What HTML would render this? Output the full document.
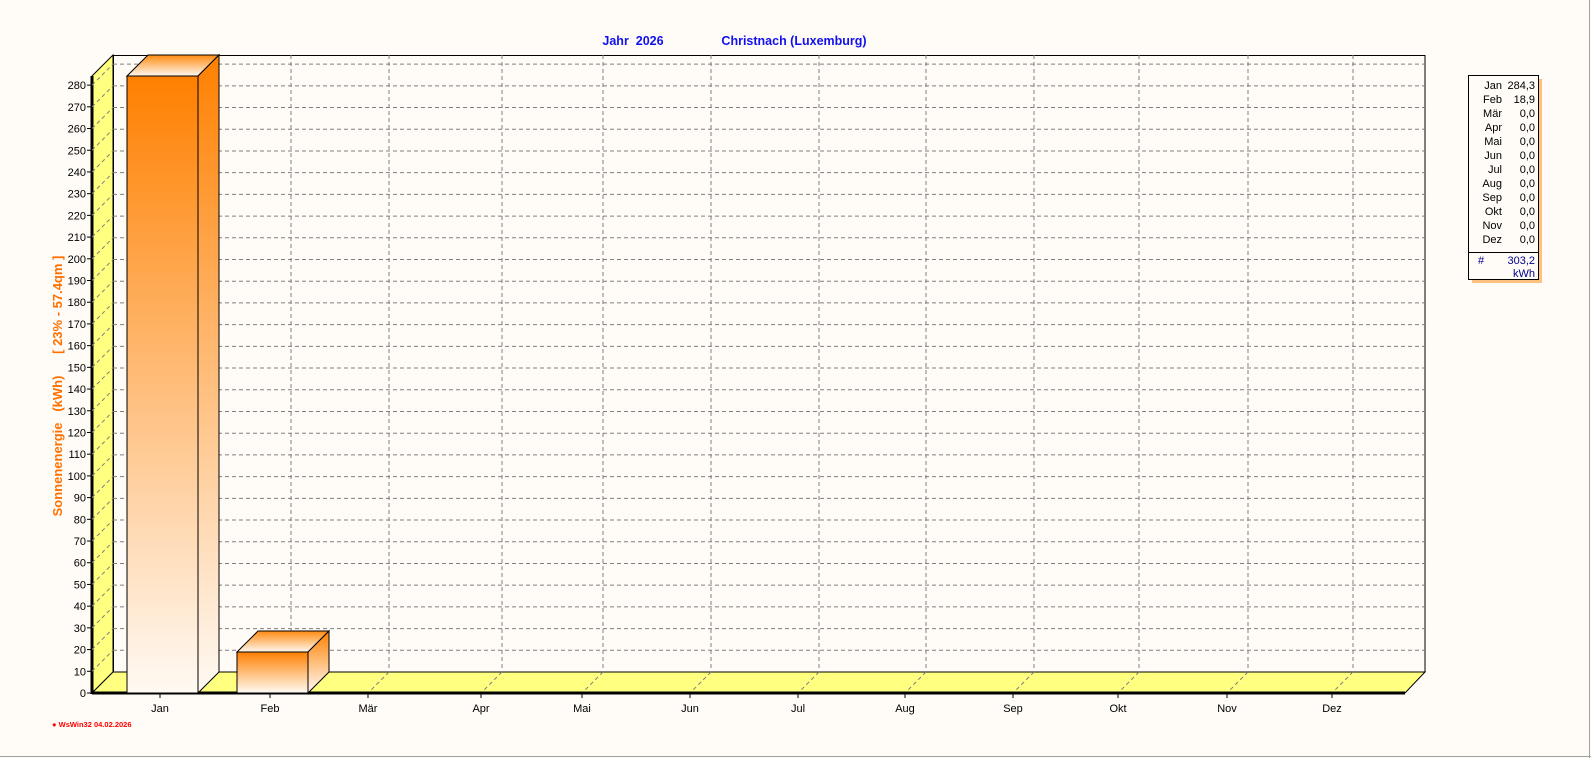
<!DOCTYPE html>
<html><head><meta charset="utf-8"><style>
html,body{margin:0;padding:0;background:#fffbf6;}
svg{display:block;font-family:"Liberation Sans",sans-serif;}
</style></head><body>
<svg width="1591" height="758" viewBox="0 0 1591 758" xmlns="http://www.w3.org/2000/svg">
<defs>
<linearGradient id="gv" x1="0" y1="0" x2="0" y2="1"><stop offset="0" stop-color="#ff8000"/><stop offset="1" stop-color="#fffaf4"/></linearGradient>
<linearGradient id="gt" x1="0" y1="0" x2="0" y2="1"><stop offset="0" stop-color="#ff8a10"/><stop offset="1" stop-color="#fff8f0"/></linearGradient>
</defs>
<rect width="1591" height="758" fill="#fffbf6"/>
<line x1="0" y1="756.5" x2="1591" y2="756.5" stroke="#a0a0a0"/>
<line x1="1589.5" y1="0" x2="1589.5" y2="758" stroke="#a0a0a0"/>
<text x="633" y="45" fill="#1010f0" font-size="12.5" font-weight="bold" text-anchor="middle" xml:space="preserve">Jahr  2026</text>
<text x="794" y="45" fill="#1010f0" font-size="12.5" font-weight="bold" text-anchor="middle">Christnach (Luxemburg)</text>
<polygon points="92,76 113,55 113,672 92,693" fill="#ffff80" stroke="#000"/>
<line x1="92" y1="76" x2="92" y2="694" stroke="#000" stroke-width="3"/>
<polygon points="113,672 1425,672 1405,693 92,693" fill="#ffff80" stroke="#000"/>
<rect x="113.5" y="55.5" width="1311.5" height="616.5" fill="#fffbf6" stroke="#000"/>
<g stroke="#808080" stroke-dasharray="4,3" fill="none" id="g2"></g>
<line x1="92" y1="693" x2="1405" y2="693" stroke="#000" stroke-width="3"/>
<g id="labels" font-size="11" fill="#000"></g>
<polygon points="127,76 148,55 219,55 198,76" fill="url(#gt)" stroke="#000"/>
<polygon points="198,76 219,55 219,672 198,693" fill="url(#gv)" stroke="#000"/>
<rect x="127" y="76" width="71" height="617" fill="url(#gv)" stroke="#000"/>
<polygon points="237,652 258,631 329,631 308,652" fill="url(#gt)" stroke="#000"/>
<polygon points="308,652 329,631 329,672 308,693" fill="url(#gv)" stroke="#000"/>
<rect x="237" y="652" width="71" height="41" fill="url(#gv)" stroke="#000"/>
<text transform="translate(62,386) rotate(-90)" fill="#ff7000" font-size="13" font-weight="bold" text-anchor="middle" xml:space="preserve">Sonnenenergie   (kWh)      [ 23% - 57.4qm ]</text>
<text x="52" y="727" fill="#ff0000" font-size="7.5" font-weight="bold">● WsWin32  04.02.2026</text>
<rect x="1472" y="79" width="70" height="204" fill="#ffc080"/>
<rect x="1468.5" y="75.5" width="70" height="204" fill="#fffbf6" stroke="#000"/>
<line x1="1468" y1="252.5" x2="1538" y2="252.5" stroke="#000"/>
<g font-size="11" fill="#000" text-anchor="end" id="leg"></g>
<text x="1478" y="264" fill="#00008b" font-size="11">#</text>
<text x="1535" y="264" fill="#00008b" font-size="11" text-anchor="end">303,2</text>
<text x="1535" y="277" fill="#00008b" font-size="11" text-anchor="end">kWh</text>
<g id="yl" font-size="11" fill="#000" text-anchor="end"></g>
</svg>
<script>
var NS="http://www.w3.org/2000/svg";
function el(p,t,a,txt){var e=document.createElementNS(NS,t);for(var k in a)e.setAttribute(k,a[k]);if(txt!=null)e.textContent=txt;document.getElementById(p).appendChild(e);return e;}
var s=2.171;
for(var v=0;v<=280;v+=10){var yf=693-v*s, yb=yf-21;
 if(v>0){el('g2','line',{x1:113,y1:yb,x2:1425,y2:yb});el('g2','line',{x1:92,y1:yf,x2:113,y2:yb});}
 el('yl','text',{x:86,y:yf+4},String(v));
 el('g2','line',{x1:87,y1:yf,x2:92,y2:yf,'stroke-dasharray':'none',stroke:'#000'});
}
var m=["Jan","Feb","Mär","Apr","Mai","Jun","Jul","Aug","Sep","Okt","Nov","Dez"];
var lx=[160,270,368,481,582,690,798,905,1013,1118,1227,1332];
for(var i=0;i<12;i++){
 el('labels','text',{x:lx[i],y:712,'text-anchor':'middle'},m[i]);
 if(i>=1){var bx=lx[i]+21;el('g2','line',{x1:bx,y1:55,x2:bx,y2:672});el('g2','line',{x1:bx,y1:672,x2:lx[i],y2:693});}
 el('g2','line',{x1:lx[i],y1:693,x2:lx[i],y2:698,'stroke-dasharray':'none',stroke:'#000'});
}
var vals=["284,3","18,9","0,0","0,0","0,0","0,0","0,0","0,0","0,0","0,0","0,0","0,0"];
for(var i=0;i<12;i++){var y=89+i*14;el('leg','text',{x:1502,y:y},m[i]);el('leg','text',{x:1535,y:y},vals[i]);}
</script>
</body></html>
